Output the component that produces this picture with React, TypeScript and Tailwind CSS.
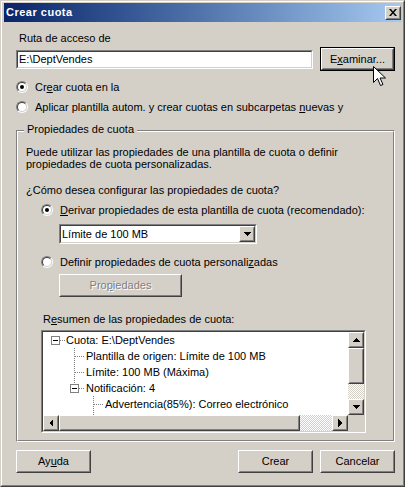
import type { ReactNode } from "react";

const FONT = "font-['Liberation_Sans',Arial,sans-serif]";
const CHECKER =
  "bg-[conic-gradient(#ffffff_25%,#d4d0c8_0_50%,#ffffff_0_75%,#d4d0c8_0)] bg-[length:2px_2px]";

function Raised({ className = "", children }: { className?: string; children?: ReactNode }) {
  return (
    <div className={`border border-t-white border-l-white border-r-[#404040] border-b-[#404040] bg-[#d4d0c8] ${className}`}>
      <div className="w-full h-full border border-t-[#d4d0c8] border-l-[#d4d0c8] border-r-[#808080] border-b-[#808080] flex items-center justify-center">
        {children}
      </div>
    </div>
  );
}

function Sunken({ className = "", children }: { className?: string; children?: ReactNode }) {
  return (
    <div className={`border border-t-[#808080] border-l-[#808080] border-r-white border-b-white ${className}`}>
      <div className="w-full h-full border border-t-[#404040] border-l-[#404040] border-r-[#d4d0c8] border-b-[#d4d0c8] bg-white">
        {children}
      </div>
    </div>
  );
}

function Radio({ checked }: { checked?: boolean }) {
  return (
    <div className="w-[12px] h-[12px] shrink-0 rounded-full border border-t-[#808080] border-l-[#808080] border-r-white border-b-white">
      <div className="w-full h-full rounded-full border border-t-[#404040] border-l-[#404040] border-r-[#d4d0c8] border-b-[#d4d0c8] bg-white flex items-center justify-center">
        {checked && <div className="w-[4px] h-[4px] rounded-full bg-black" />}
      </div>
    </div>
  );
}

function Arrow({ dir }: { dir: "up" | "down" | "left" | "right" }) {
  const pts = {
    up: "4,1 0,5 8,5",
    down: "0,1 8,1 4,5",
    left: "5,0 5,8 1,4",
    right: "1,0 1,8 5,4",
  }[dir];
  const vertical = dir === "up" || dir === "down";
  return (
    <svg width={vertical ? 8 : 6} height={vertical ? 6 : 8} viewBox={vertical ? "0 0 8 6" : "0 0 6 8"}>
      <polygon points={pts} fill="#000" shapeRendering="crispEdges" />
    </svg>
  );
}

function ScrollBtn({ dir }: { dir: "up" | "down" | "left" | "right" }) {
  return (
    <Raised className="w-[16px] h-[16px] shrink-0">
      <Arrow dir={dir} />
    </Raised>
  );
}

const treeRows = [
  { pl: "pl-[23px]", text: "Cuota: E:\\DeptVendes" },
  { pl: "pl-[43px]", text: "Plantilla de origen: Límite de 100 MB" },
  { pl: "pl-[43px]", text: "Límite: 100 MB (Máxima)" },
  { pl: "pl-[43px]", text: "Notificación: 4" },
  { pl: "pl-[62px]", text: "Advertencia(85%): Correo electrónico" },
];

function TreeLines() {
  const dot = { stroke: "#808080", strokeDasharray: "1 1", shapeRendering: "crispEdges" as const };
  return (
    <svg className="absolute left-0 top-0 pointer-events-none" width="305" height="83">
      <line x1="17" y1="8.5" x2="22" y2="8.5" {...dot} />
      <line x1="31.5" y1="16" x2="31.5" y2="52" {...dot} />
      <line x1="32" y1="24.5" x2="42" y2="24.5" {...dot} />
      <line x1="32" y1="40.5" x2="42" y2="40.5" {...dot} />
      <line x1="36" y1="56.5" x2="42" y2="56.5" {...dot} />
      <line x1="50.5" y1="64" x2="50.5" y2="83" {...dot} />
      <line x1="51" y1="72.5" x2="61" y2="72.5" {...dot} />
      <rect x="8.5" y="4.5" width="8" height="8" fill="#fff" stroke="#808080" shapeRendering="crispEdges" />
      <line x1="10" y1="8.5" x2="15" y2="8.5" stroke="#000" shapeRendering="crispEdges" />
      <rect x="27.5" y="52.5" width="8" height="8" fill="#fff" stroke="#808080" shapeRendering="crispEdges" />
      <line x1="29" y1="56.5" x2="34" y2="56.5" stroke="#000" shapeRendering="crispEdges" />
    </svg>
  );
}

export default function App() {
  return (
    <div className={`${FONT} relative w-[405px] h-[487px] bg-[#d4d0c8] text-[11px] leading-[13px] text-black border border-t-[#d4d0c8] border-l-[#d4d0c8] border-r-[#404040] border-b-[#404040]`}>
      <div className="w-full h-full border border-t-white border-l-white border-r-[#808080] border-b-[#808080] pl-[2px] pr-[1px] pt-[1px] flex flex-col">
        {/* title bar */}
        <div className="h-[19px] shrink-0 bg-linear-to-r from-[#0a246a] to-[#a6caf0] flex items-center justify-between pl-[2px] pr-[1px]">
          <span className="text-white font-bold tracking-[0.5px]">Crear cuota</span>
          <Raised className="w-[16px] h-[14px]">
            <svg width="8" height="7" viewBox="0 0 8 7">
              <path d="M0 0h2l2 2.5L6 0h2L5 3.5 8 7H6L4 4.5 2 7H0l3-3.5z" fill="#000" />
            </svg>
          </Raised>
        </div>

        <div className="pl-[12px] flex flex-col">
          <div className="mt-[10px] pl-[3px]">Ruta de acceso de</div>

          <div className="mt-[2px] h-[24px] flex items-center">
            <Sunken className="w-[297px] h-[19px]">
              <div className="pl-[1px] leading-[15px]">E:\DeptVendes</div>
            </Sunken>
            <div className="ml-[7px] w-[75px] h-[24px] border border-black">
              <Raised className="w-full h-full">
                <span>
                  E<u>x</u>aminar...
                </span>
              </Raised>
            </div>
          </div>

          <div className="mt-[9px] h-[14px] flex items-center gap-[7px]">
            <Radio checked />
            <span>
              Cr<u>e</u>ar cuota en la
            </span>
          </div>
          <div className="mt-[6px] h-[14px] flex items-center gap-[7px]">
            <Radio />
            <span>
              Aplicar plantilla autom. y crear cuotas en subcarpetas <u>n</u>uevas y
            </span>
          </div>

          {/* group box */}
          <div className="relative mt-[16px] w-[379px] h-[312px] border border-t-[#808080] border-l-[#808080] border-r-white border-b-white">
            <div className="absolute left-[7px] top-[-8px] px-[3px] bg-[#d4d0c8]">Propiedades de cuota</div>
            <div className="w-full h-full border border-t-white border-l-white border-r-[#808080] border-b-[#808080] flex flex-col">
              <p className="mt-[14px] pl-[8px] leading-[12px]">
                Puede utilizar las propiedades de una plantilla de cuota o definir
                <br />
                propiedades de cuota personalizadas.
              </p>
              <div className="mt-[14px] pl-[8px]">¿Cómo desea configurar las propiedades de cuota?</div>

              <div className="mt-[6px] ml-[23px] h-[14px] flex items-center gap-[7px]">
                <Radio checked />
                <span>
                  <u>D</u>erivar propiedades de esta plantilla de cuota (recomendado):
                </span>
              </div>

              <Sunken className="mt-[7px] ml-[41px] w-[198px] h-[20px]">
                <div className="h-full flex items-center justify-between">
                  <span className="pl-[1px]">Límite de 100 MB</span>
                  <Raised className="w-[16px] h-full">
                    <Arrow dir="down" />
                  </Raised>
                </div>
              </Sunken>

              <div className="mt-[11px] ml-[23px] h-[14px] flex items-center gap-[7px]">
                <Radio />
                <span>
                  Definir propiedades de cuota personali<u>z</u>adas
                </span>
              </div>

              <Raised className="mt-[5px] ml-[41px] w-[123px] h-[23px]">
                <span className="text-[#808080] [text-shadow:1px_1px_0_#ffffff]">
                  Pro<u>p</u>iedades
                </span>
              </Raised>

              <div className="mt-[16px] ml-[25px]">
                R<u>e</u>sumen de las propiedades de cuota:
              </div>

              <Sunken className="mt-[4px] ml-[23px] w-[325px] h-[103px]">
                <div className="w-full h-full grid grid-cols-[1fr_16px] grid-rows-[1fr_16px]">
                  <div className="relative overflow-hidden">
                    <TreeLines />
                    {treeRows.map((r, i) => (
                      <div key={i} className={`relative h-[16px] leading-[16px] whitespace-nowrap ${r.pl}`}>
                        {r.text}
                      </div>
                    ))}
                  </div>
                  <div className="flex flex-col">
                    <ScrollBtn dir="up" />
                    <Raised className="w-[16px] h-[36px]" />
                    <div className={`flex-1 ${CHECKER}`} />
                    <ScrollBtn dir="down" />
                  </div>
                  <div className="flex">
                    <ScrollBtn dir="left" />
                    <Raised className="w-[241px] h-[16px]" />
                    <div className={`flex-1 ${CHECKER}`} />
                    <ScrollBtn dir="right" />
                  </div>
                  <div className="bg-[#d4d0c8]" />
                </div>
              </Sunken>
            </div>
          </div>

          <div className="mt-[8px] flex items-center">
            <Raised className="w-[75px] h-[23px]">
              <span>
                Ay<u>u</u>da
              </span>
            </Raised>
            <Raised className="ml-[147px] w-[75px] h-[23px]">
              <span>Crear</span>
            </Raised>
            <Raised className="ml-[7px] w-[75px] h-[23px]">
              <span>Cancelar</span>
            </Raised>
          </div>
        </div>
      </div>

      {/* mouse pointer */}
      <svg className="absolute left-[372px] top-[65px] pointer-events-none" width="13" height="21" viewBox="0 0 13 21">
        <path d="M0.5 0.5v16l4-4 3 7 2.5-1-3-6.5h5.5z" fill="#fff" stroke="#000" strokeLinejoin="miter" />
      </svg>
    </div>
  );
}
